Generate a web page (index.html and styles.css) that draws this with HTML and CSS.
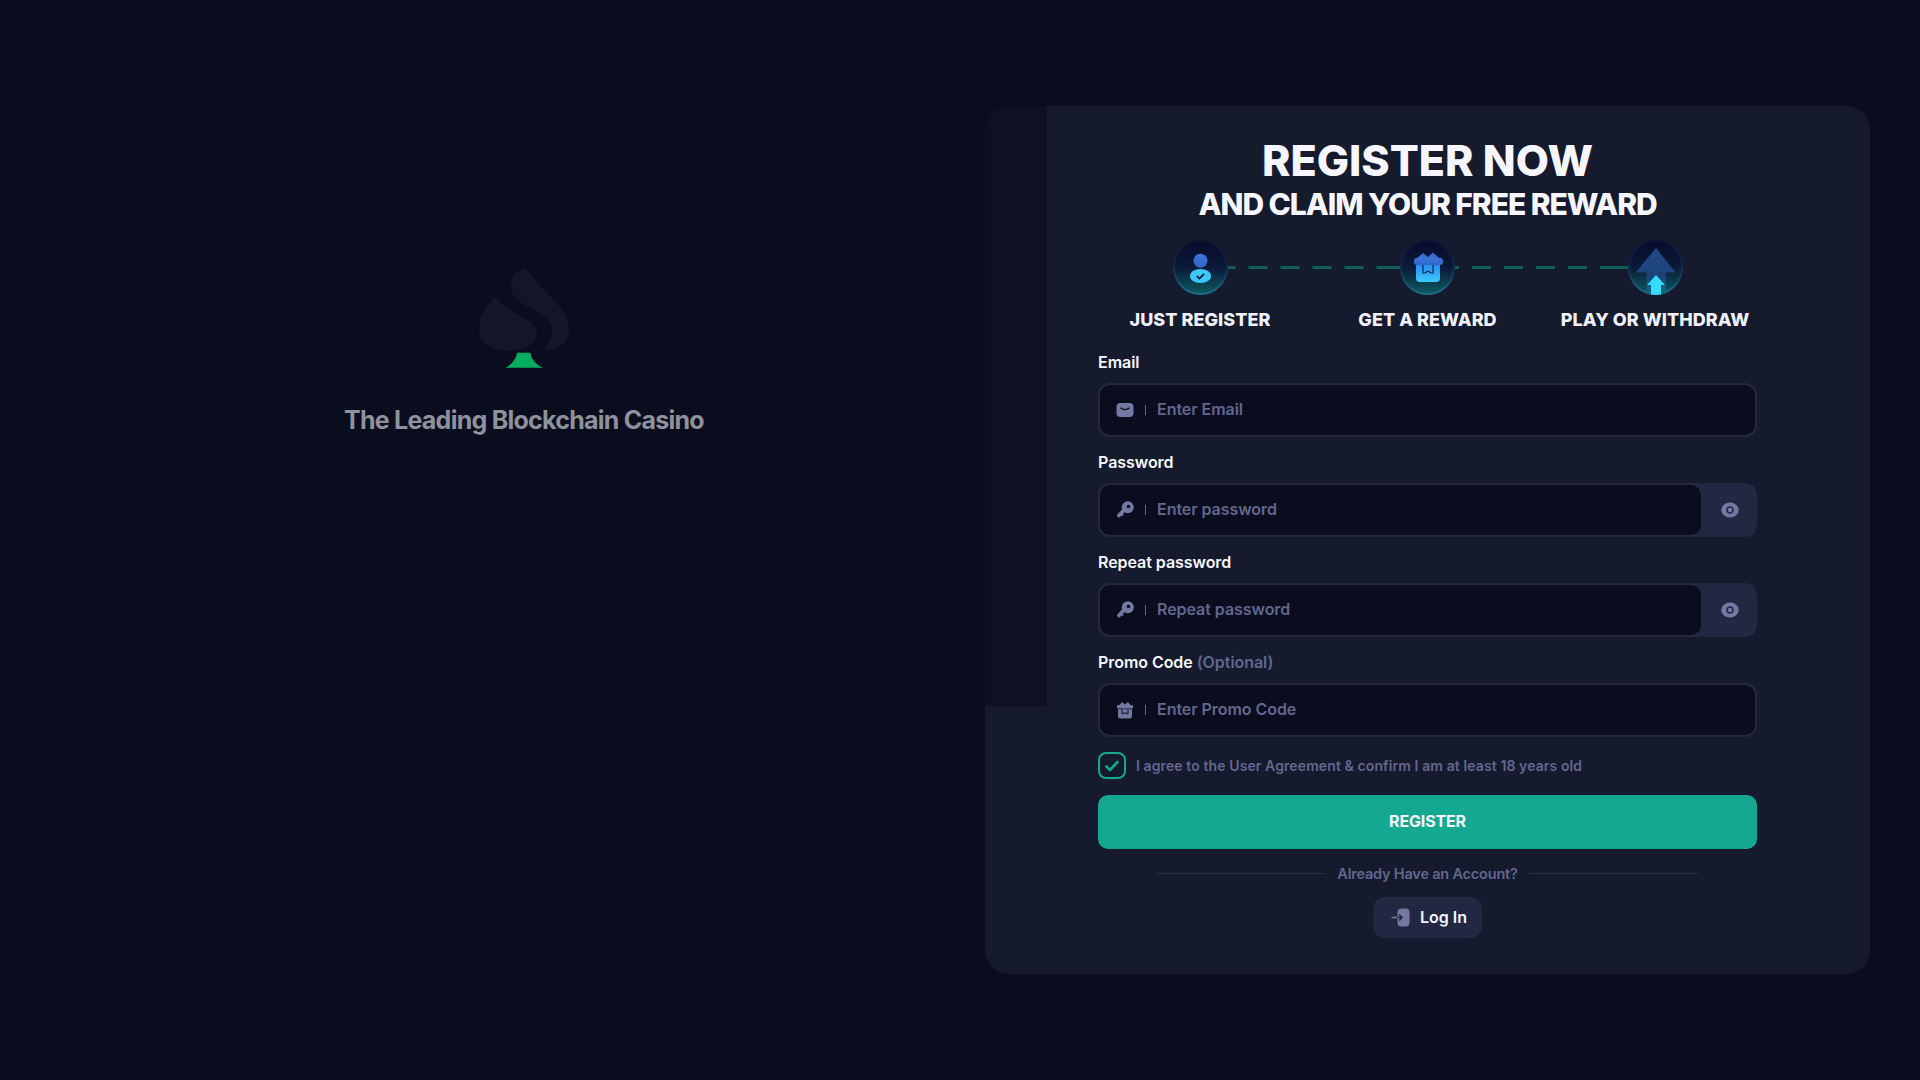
FILE: index.html
```html
<!DOCTYPE html>
<html lang="en">
<head>
<meta charset="utf-8">
<title>Register</title>
<link rel="stylesheet" href="styles.css">
</head>
<body>
<div class="page">
  <section class="brand">
    <svg class="brand-logo" viewBox="118 85 270 300" aria-hidden="true">
      <path class="spade" d="M170 172C140 195 118 225 118 268C118 305 150 333 200 333C245 333 292 320 292 280C292 240 240 235 205 205C190 195 178 182 170 172Z"/>
      <path class="spade" d="M245 88C225 97 213 115 213 140C213 170 245 195 285 212C320 230 340 250 338 278C336 300 322 322 308 333C350 333 388 315 388 272C388 240 370 210 345 185L258 88C255 85 250 85 245 88Z"/>
      <path class="stem" d="M233 339L272 339C275 360 290 375 310 384L197 384C215 375 228 360 233 339Z"/>
    </svg>
    <p class="brand-text">The Leading Blockchain Casino</p>
  </section>

  <main class="card">
    <div class="card-shade"></div>
    <h1 class="title">REGISTER NOW</h1>
    <h2 class="subtitle">AND CLAIM YOUR FREE REWARD</h2>

    <div class="steps">
      <svg class="step-icon" viewBox="0 0 55 55" aria-hidden="true">
        <defs>
          <linearGradient id="disc" x1="0" y1="0" x2="0" y2="1"><stop offset="0" stop-color="#080b2c"/><stop offset=".5" stop-color="#0a1a38"/><stop offset="1" stop-color="#0e5a60"/></linearGradient>
          <linearGradient id="rim" x1="0" y1="0" x2="0" y2="1"><stop offset="0" stop-color="#0d1230"/><stop offset=".5" stop-color="#12284c"/><stop offset="1" stop-color="#1b6d8a"/></linearGradient>
          <linearGradient id="blue" x1="0" y1="0" x2="0" y2="1"><stop offset="0" stop-color="#3f74d8"/><stop offset="1" stop-color="#2f66c8"/></linearGradient>
          <linearGradient id="cyan" x1="0" y1="0" x2="0" y2="1"><stop offset="0" stop-color="#2a8cf0"/><stop offset="1" stop-color="#38ccff"/></linearGradient>
          <linearGradient id="bigarrow" x1="0" y1="0" x2="0" y2="1"><stop offset="0" stop-color="#234788"/><stop offset=".6" stop-color="#1b4478"/><stop offset="1" stop-color="#106a7e"/></linearGradient>
          <clipPath id="discclip"><circle cx="27.5" cy="27.5" r="27.5"/></clipPath>
        </defs>
        <circle cx="27.5" cy="27.5" r="26.5" fill="url(#disc)" stroke="url(#rim)" stroke-width="2"/>
        <circle cx="27.5" cy="20.7" r="7" fill="url(#blue)"/>
        <ellipse cx="27.5" cy="36" rx="10.7" ry="7" fill="#3cc8ff"/>
        <path d="M23.8 36l2.6 2.6 4.6-4.6" fill="none" stroke="#16233f" stroke-width="1.8"/>
      </svg>
      <div class="step-line step-line-a"></div>
      <svg class="step-icon" viewBox="0 0 55 55" aria-hidden="true">
        <circle cx="27.5" cy="27.5" r="26.5" fill="url(#disc)" stroke="url(#rim)" stroke-width="2"/>
        <path d="M17 18l6-5 5 4 5-4.500 6 5.500z" fill="#3a6dd0"/>
        <rect x="14" y="18" width="29" height="7" rx="3" fill="url(#blue)"/>
        <path d="M16 25H40V38A4 4 0 0 1 36 42H20A4 4 0 0 1 16 38Z" fill="url(#cyan)"/>
        <path d="M23 25V33H25L28 31L31 33H33V25" fill="none" stroke="#10284a" stroke-width="1.200"/>
      </svg>
      <div class="step-line step-line-b"></div>
      <svg class="step-icon" viewBox="0 0 55 55" aria-hidden="true">
        <circle cx="27.5" cy="27.5" r="26.5" fill="url(#disc)" stroke="url(#rim)" stroke-width="2"/>
        <g clip-path="url(#discclip)">
          <path d="M28 8L47.500 32.500H38V55H18.500V32.500H7.500Z" fill="url(#bigarrow)"/>
          <path d="M28 35L37 45H33V55H23V45H19Z" fill="#35dcff"/>
        </g>
      </svg>
    </div>
    <div class="step-labels">
      <span class="step-label">JUST REGISTER</span>
      <span class="step-label">GET A REWARD</span>
      <span class="step-label">PLAY OR WITHDRAW</span>
    </div>

    <form class="form">
      <div class="field">
        <label class="field-label">Email</label>
        <div class="input-wrap">
          <div class="input-box">
            <svg class="input-icon" viewBox="0 0 18 18" aria-hidden="true"><rect x="0.500" y="2" width="17" height="14" rx="4" fill="#7479a3"/><path d="M4.500 6.800Q9 10.500 13.500 6.800" fill="none" stroke="#0a0d1d" stroke-width="1.300"/></svg>
            <span class="input-sep"></span>
            <input class="input" type="text" placeholder="Enter Email">
          </div>
        </div>
      </div>
      <div class="field">
        <label class="field-label">Password</label>
        <div class="input-wrap has-eye">
          <div class="input-box">
            <svg class="input-icon" viewBox="0 0 18 18" aria-hidden="true"><path d="M8 9L3 14.500" stroke="#7479a3" stroke-width="3.800" stroke-linecap="round"/><circle cx="11.800" cy="6.200" r="6" fill="#7479a3"/><circle cx="12.500" cy="5.500" r="1.800" fill="#0a0d1d"/><path d="M4.500 12L7 14.500" stroke="#7479a3" stroke-width="2"/></svg>
            <span class="input-sep"></span>
            <input class="input" type="password" placeholder="Enter password">
          </div>
          <button class="eye" type="button" aria-label="Show password"><svg class="eye-icon" viewBox="0 0 18 16" aria-hidden="true"><ellipse cx="9" cy="8" rx="8.700" ry="7.400" fill="#7479a3"/><circle cx="9" cy="8" r="3" fill="none" stroke="#232842" stroke-width="1.500"/></svg></button>
        </div>
      </div>
      <div class="field">
        <label class="field-label">Repeat password</label>
        <div class="input-wrap has-eye">
          <div class="input-box">
            <svg class="input-icon" viewBox="0 0 18 18" aria-hidden="true"><path d="M8 9L3 14.500" stroke="#7479a3" stroke-width="3.800" stroke-linecap="round"/><circle cx="11.800" cy="6.200" r="6" fill="#7479a3"/><circle cx="12.500" cy="5.500" r="1.800" fill="#0a0d1d"/><path d="M4.500 12L7 14.500" stroke="#7479a3" stroke-width="2"/></svg>
            <span class="input-sep"></span>
            <input class="input" type="password" placeholder="Repeat password">
          </div>
          <button class="eye" type="button" aria-label="Show password"><svg class="eye-icon" viewBox="0 0 18 16" aria-hidden="true"><ellipse cx="9" cy="8" rx="8.700" ry="7.400" fill="#7479a3"/><circle cx="9" cy="8" r="3" fill="none" stroke="#232842" stroke-width="1.500"/></svg></button>
        </div>
      </div>
      <div class="field">
        <label class="field-label">Promo Code <span class="optional">(Optional)</span></label>
        <div class="input-wrap">
          <div class="input-box">
            <svg class="input-icon" viewBox="0 0 18 18" aria-hidden="true"><path d="M3 4.500L6 1l3 2.500L12 1l3 3.500z" fill="#7479a3"/><rect x="0.800" y="4" width="16.400" height="3.500" rx="1.500" fill="#7479a3"/><path d="M2 8.300H16V15A2.500 2.500 0 0 1 13.500 17.500H4.500A2.500 2.500 0 0 1 2 15Z" fill="#7479a3"/><path d="M6 8.300V13L9 11.800L12 13V8.300" fill="none" stroke="#0a0d1d" stroke-width="1"/></svg>
            <span class="input-sep"></span>
            <input class="input" type="text" placeholder="Enter Promo Code">
          </div>
        </div>
      </div>

      <div class="agree">
        <span class="checkbox"><svg class="check" viewBox="0 0 14 12" aria-hidden="true"><path d="M1.500 6.500L5 10L12.500 2" fill="none" stroke="#14a88f" stroke-width="2.600" stroke-linecap="round" stroke-linejoin="round"/></svg></span>
        <span class="agree-text">I agree to the User Agreement &amp; confirm I am at least 18 years old</span>
      </div>

      <button class="submit" type="button">REGISTER</button>

      <div class="divider"><span class="divider-line"></span><span class="divider-text">Already Have an Account?</span><span class="divider-line"></span></div>

      <button class="login" type="button">
        <svg class="login-icon" viewBox="0 0 19 19" aria-hidden="true"><rect x="6.500" y="0.500" width="12" height="18" rx="4" fill="#7479a3"/><path d="M0.500 9.500H11M8 6.500L11 9.500L8 12.500" fill="none" stroke="#232842" stroke-width="1.500"/><path d="M0.500 9.500H6.500" stroke="#7479a3" stroke-width="1.500"/></svg>
        <span>Log In</span>
      </button>
    </form>
  </main>
</div>
</body>
</html>
```
FILE: styles.css
```css
* { box-sizing: border-box; }
html, body { margin: 0; height: 100%; }
body {
  background: #0a0d1e;
  color: #f5f6ff;
  font-family: "Inter", "Liberation Sans", sans-serif;
  overflow: hidden;
}
.page { display: flex; align-items: flex-start; height: 1080px; }

.brand {
  flex: 0 0 1048px;
  display: flex;
  flex-direction: column;
  align-items: center;
  padding-top: 268px;
}
.brand-logo { display: block; width: 90px; height: 100px; }
.spade { fill: #121628; }
.stem { fill: #00ae5f; }
.brand-text {
  margin: 36px 0 0;
  font-size: 25px;
  line-height: 32px;
  font-weight: 700;
  color: #8f919c;
  letter-spacing: -0.75px;
}

.card {
  position: relative;
  flex: 0 0 885px;
  margin-top: 106px;
  margin-left: -63px;
  padding: 32px 113px 36px;
  background: #151a2d;
  border-radius: 24px;
  overflow: hidden;
}
.card-shade {
  position: absolute;
  left: 0;
  top: 0;
  width: 62px;
  height: 600px;
  background: #0e1122;
}
.title {
  margin: 0;
  text-align: center;
  font-size: 43px;
  line-height: 44px;
  font-weight: 800;
  letter-spacing: 0;
}
.subtitle {
  margin: 4px 0 0;
  text-align: center;
  font-size: 30px;
  line-height: 36px;
  font-weight: 800;
  letter-spacing: -1.05px;
}

.steps {
  display: flex;
  justify-content: center;
  margin: 18px -12px 0;
}
.step-icon { display: block; flex: 0 0 55px; width: 55px; height: 55px; }
.step-line {
  flex: 0 0 172.5px;
  height: 3px;
  margin-top: 25.5px;
  background-image: repeating-linear-gradient(90deg, #0f5f57 0 19px, transparent 19px 32px);
}
.step-line-a { background-position-x: -11.5px; }
.step-line-b { background-position-x: -15px; }
.step-labels {
  display: grid;
  grid-template-columns: repeat(3, 227.5px);
  justify-content: center;
  margin: 14px -12px 0;
}
.step-label {
  text-align: center;
  font-size: 18px;
  line-height: 22px;
  font-weight: 800;
  letter-spacing: 0.05px;
  color: #eef0fb;
}

.form { display: flex; flex-direction: column; margin-top: 21px; }
.field { display: flex; flex-direction: column; gap: 11px; margin-bottom: 15px; }
.field-label {
  font-size: 16px;
  line-height: 20px;
  font-weight: 600;
  letter-spacing: -0.05px;
  color: #f5f6ff;
}
.optional { color: #62678f; }
.input-wrap { display: flex; border-radius: 12px; }
.input-wrap.has-eye { background: #232842; }
.input-box {
  flex: 1;
  min-width: 0;
  display: flex;
  align-items: center;
  height: 54px;
  padding-left: 16px;
  background: #0a0d1e;
  border: 2px solid #232842;
  border-radius: 12px;
}
.input-icon { flex: 0 0 18px; width: 18px; height: 18px; }
.input-sep { flex: 0 0 1px; height: 10px; margin: 0 11px 0 11px; background: #62678f; }
.input {
  flex: 1;
  min-width: 0;
  height: 100%;
  padding: 0 0 2px;
  border: 0;
  outline: 0;
  background: transparent;
  color: #f5f6ff;
  font: 600 16px "Inter", "Liberation Sans", sans-serif;
  letter-spacing: -0.05px;
}
.input::placeholder { color: #62678f; opacity: 1; }
.eye {
  flex: 0 0 54px;
  display: flex;
  align-items: center;
  justify-content: center;
  padding: 0;
  border: 0;
  background: transparent;
}
.eye-icon { width: 18px; height: 16px; }

.agree { display: flex; align-items: center; gap: 10px; height: 27px; }
.checkbox {
  flex: 0 0 28px;
  display: flex;
  align-items: center;
  justify-content: center;
  height: 27px;
  border: 2px solid #14a88f;
  border-radius: 8px;
}
.check { width: 14px; height: 12px; }
.agree-text { font-size: 14px; font-weight: 600; letter-spacing: 0.1px; color: #62678f; padding-bottom: 1px; }

.submit {
  height: 54px;
  margin-top: 16px;
  padding: 0 0 2px;
  border: 0;
  border-radius: 10px;
  background: #13a88f;
  color: #f5f6ff;
  font: 700 16px "Inter", "Liberation Sans", sans-serif;
  letter-spacing: -0.15px;
}
.divider {
  display: flex;
  align-items: center;
  justify-content: center;
  gap: 11px;
  height: 20px;
  margin-top: 14px;
}
.divider-line { flex: 0 0 169px; height: 1px; background: #2a2f4c; }
.divider-text { font-size: 14.5px; font-weight: 600; letter-spacing: -0.2px; color: #62678f; }
.login {
  align-self: center;
  display: flex;
  align-items: center;
  gap: 10px;
  height: 41px;
  margin-top: 14px;
  padding: 0 15px 1px 18px;
  border: 0;
  border-radius: 12px;
  background: #232842;
  color: #f5f6ff;
  font: 600 16px "Inter", "Liberation Sans", sans-serif;
}
.login-icon { width: 19px; height: 19px; }
```
